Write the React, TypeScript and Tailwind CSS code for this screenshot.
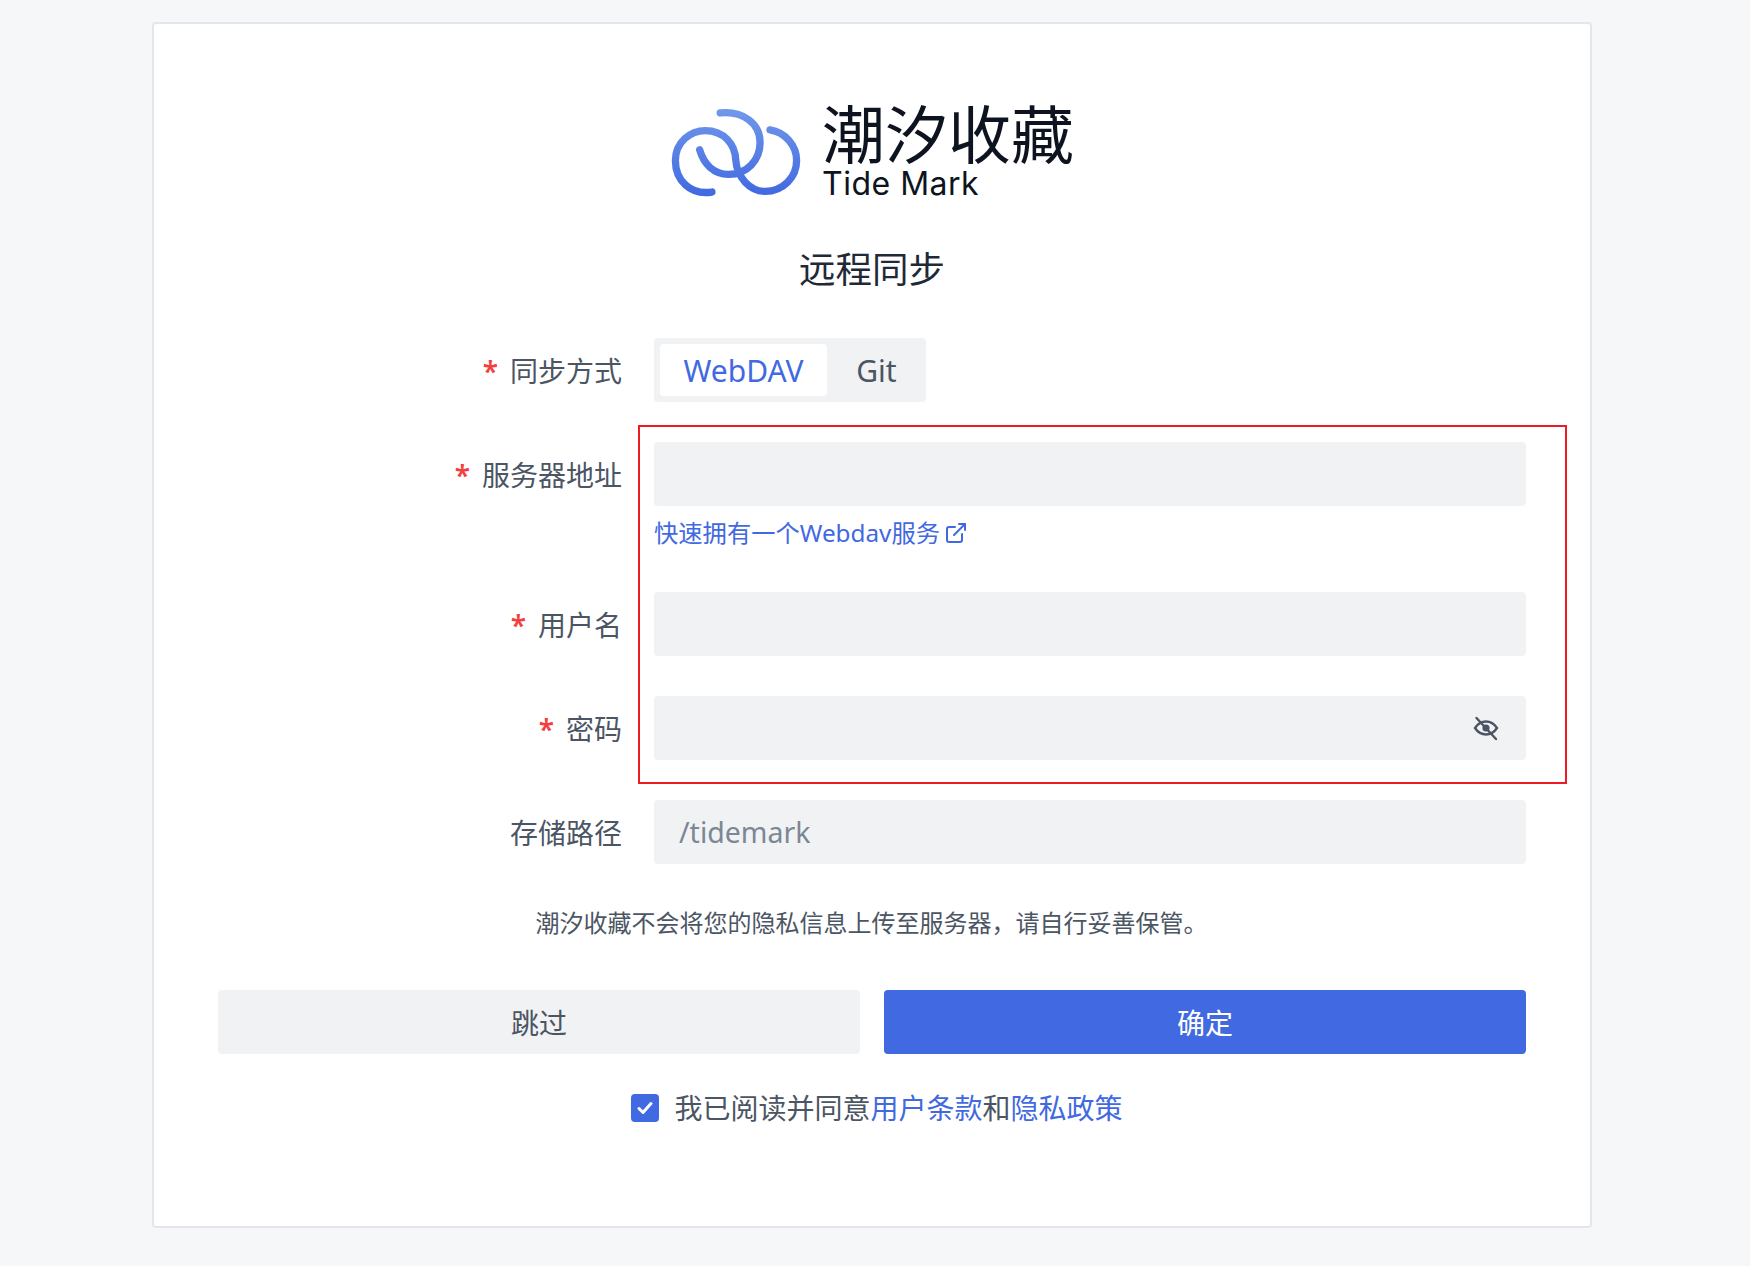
import { ExternalLink } from 'lucide-react'

const cjk = "font-['Noto_Sans','Noto_Sans_CJK_SC',sans-serif]"

function Logo() {
    return (
        <svg width="132" height="88" viewBox="90 85 395 265" fill="none" className="mt-[6px]">
            <defs>
                <linearGradient id="tide" gradientUnits="userSpaceOnUse" x1="0" y1="85" x2="0" y2="345">
                    <stop offset="0" stopColor="#7098ea" />
                    <stop offset="1" stopColor="#4169e1" />
                </linearGradient>
            </defs>
            <path
                d="M215 335C150 345 105 300 105 240C105 185 150 150 195 150C250 150 285 190 287 240C290 290 330 333 375 333C430 333 470 290 470 240C470 195 435 155 390 148"
                stroke="url(#tide)"
                strokeWidth="22"
                strokeLinecap="round"
            />
            <path
                d="M240 97C310 90 360 130 360 185C360 240 320 282 265 282C220 282 190 250 178 208"
                stroke="url(#tide)"
                strokeWidth="22"
                strokeLinecap="round"
            />
        </svg>
    )
}

function EyeOff() {
    return (
        <svg width="26" height="26" viewBox="0 0 26 26" fill="none" stroke="#4b5563" strokeWidth="2.4" strokeLinecap="round">
            <path d="M2 13C5 8.5 8.5 6.5 13 6.5S21 8.5 24 13C21 17.5 17.5 19.5 13 19.5S5 17.5 2 13Z" />
            <circle cx="13" cy="13" r="3.6" fill="#4b5563" stroke="none" />
            <path d="M3.5 3L23 24" />
        </svg>
    )
}

function FormRow({ label, required, children }: { label: string; required?: boolean; children: React.ReactNode }) {
    return (
        <div className="flex">
            <label className="w-[436px] shrink-0 pr-[32px] pt-[2px] h-16 flex items-center justify-end text-[28px] text-[#4b5563]">
                {required && <span className="text-[#f43f3f] font-semibold mr-[12px]">*</span>}
                {label}
            </label>
            <div className="flex-1 min-w-0">{children}</div>
        </div>
    )
}

function Field({ placeholder, children }: { placeholder?: string; children?: React.ReactNode }) {
    return (
        <div className="h-16 bg-[#f1f2f4] rounded-[4px] pl-[25px] pr-[27px] flex items-center justify-between text-[28.5px] text-[#7b8794]">
            <span>{placeholder}</span>
            {children}
        </div>
    )
}

export default function App() {
    return (
        <div className={`${cjk} min-h-[1266px] bg-[#f6f7f9] pt-[22px] pl-[152px] pr-[158px]`}>
            <div className="h-[1206px] bg-white border-2 border-[#e5e6eb] rounded-[4px] pl-[64px] pr-[64px] pt-[76px]">
                {/* Logo */}
                <div className="flex justify-center items-center gap-[20px]">
                    <Logo />
                    <div className="flex flex-col">
                        <span className="text-[63px] leading-[68px] text-[#0d1420]">潮汐收藏</span>
                        <span className="font-['Inter',sans-serif] text-[32px] leading-[32px] text-[#0d1420] tracking-[0.5px]">Tide Mark</span>
                    </div>
                </div>

                <h1 className="text-[36.5px] leading-[48px] text-[#1f2937] text-center mt-[45px]">远程同步</h1>

                {/* Form */}
                <div className="relative mt-[45px] flex flex-col gap-10">
                    <FormRow label="同步方式" required>
                        <div className="w-[272px] h-16 bg-[#f1f2f4] rounded-[4px] p-[6px] flex items-center text-[30px]">
                            <span className="w-[167px] h-[52px] bg-white rounded-[4px] flex items-center justify-center text-[#4169e1]">WebDAV</span>
                            <span className="flex-1 text-center pl-[6px] text-[#4b5563]">Git</span>
                        </div>
                    </FormRow>

                    <FormRow label="服务器地址" required>
                        <Field />
                        <a className="flex items-center gap-[4px] mt-[8px] h-[38px] text-[24.3px] text-[#4169e1]">
                            <span>快速拥有一个Webdav服务</span>
                            <ExternalLink size={24} strokeWidth={2} />
                        </a>
                    </FormRow>

                    <FormRow label="用户名" required>
                        <Field />
                    </FormRow>

                    <FormRow label="密码" required>
                        <Field>
                            <EyeOff />
                        </Field>
                    </FormRow>

                    <FormRow label="存储路径">
                        <Field placeholder="/tidemark" />
                    </FormRow>

                    {/* Annotation */}
                    <div className="absolute left-[420px] top-[87px] w-[929px] h-[359px] border-2 border-[#ed1c24] pointer-events-none" />
                </div>

                <p className="text-[24px] leading-[36px] text-[#4b5563] text-center mt-[41px] pr-[1px]">
                    潮汐收藏不会将您的隐私信息上传至服务器，请自行妥善保管。
                </p>

                {/* Actions */}
                <div className="flex gap-[24px] mt-[49px]">
                    <button className="flex-1 h-16 pt-[2px] bg-[#f1f2f4] rounded-[4px] text-[28px] text-[#4b5563]">跳过</button>
                    <button className="flex-1 h-16 pt-[2px] bg-[#4169e1] rounded-[4px] text-[28px] text-white">确定</button>
                </div>

                <div className="flex items-center justify-center mt-[33px] text-[28px] text-[#4b5563] pl-[10px]">
                    <span className="w-[28px] h-[28px] rounded-[4px] bg-[#4169e1] flex items-center justify-center mr-[15px]">
                        <svg width="16" height="14" viewBox="0 0 16 14" fill="none" stroke="#fff" strokeWidth="3" strokeLinecap="round" strokeLinejoin="round">
                            <path d="M2 7.5L6 11.5L14 2.5" />
                        </svg>
                    </span>
                    <span>我已阅读并同意</span>
                    <a className="text-[#4169e1]">用户条款</a>
                    <span>和</span>
                    <a className="text-[#4169e1]">隐私政策</a>
                </div>
            </div>
        </div>
    )
}
